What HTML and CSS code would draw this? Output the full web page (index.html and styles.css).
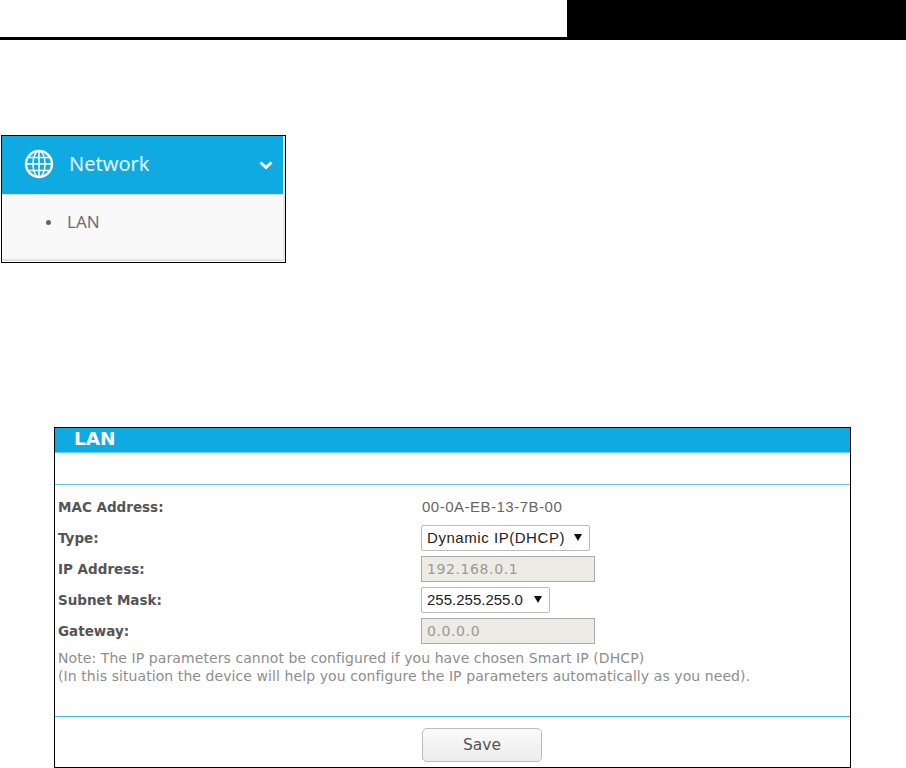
FILE: index.html
```html
<!DOCTYPE html>
<html lang="en">
<head>
<meta charset="utf-8">
<title>LAN</title>
<link rel="stylesheet" href="styles.css">
</head>
<body>
<header class="top"><div class="top-fill"></div><div class="top-block"></div></header>
<section class="menu">
  <div class="menu-head">
    <svg class="globe" width="30" height="30" viewBox="0 0 30 30" fill="none" stroke="#fff">
      <circle cx="15" cy="15" r="13" stroke-width="2.4"/>
      <ellipse cx="15" cy="15" rx="6" ry="13" stroke-width="1.5"/>
      <path d="M15 2v26M2 15h26M4.500 8.500h21M4.500 21.500h21" stroke-width="1.500"/>
    </svg>
    <span class="menu-title">Network</span>
    <svg class="chev" width="14" height="9" viewBox="0 0 14 9" fill="none" stroke="#fff" stroke-width="3"><path d="M1.500 1.500 7 6.500l5.500-5"/></svg>
  </div>
  <div class="menu-item"><span class="dot"></span><span class="menu-link">LAN</span></div>
</section>
<section class="panel">
  <h1 class="panel-title">LAN</h1>
  <div class="form">
    <div class="row row-first"><span class="label">MAC Address:</span><span class="value">00-0A-EB-13-7B-00</span></div>
    <div class="row"><span class="label">Type:</span><span class="select sel-type">Dynamic IP(DHCP)<i class="caret"></i></span></div>
    <div class="row"><span class="label">IP Address:</span><span class="input">192.168.0.1</span></div>
    <div class="row"><span class="label">Subnet Mask:</span><span class="select sel-mask">255.255.255.0<i class="caret"></i></span></div>
    <div class="row"><span class="label">Gateway:</span><span class="input">0.0.0.0</span></div>
    <p class="note">Note: The IP parameters cannot be configured if you have chosen Smart IP (DHCP)<br>(In this situation the device will help you configure the IP parameters automatically as you need).</p>
  </div>
  <div class="actions"><button class="save" type="button">Save</button></div>
</section>
</body>
</html>
```
FILE: styles.css
```css
html, body { margin: 0; padding: 0; background: #fff; }
body { height: 768px; overflow: hidden; font-family: "DejaVu Sans", Verdana, sans-serif; }
.top { display: flex; height: 37px; border-bottom: 3px solid #000; }
.top-fill { flex: 0 0 567px; }
.top-block { flex: 1; background: #000; }
.menu { box-sizing: border-box; width: 285px; height: 128px; margin: 95px 0 0 1px; border: 1px solid #000; background: #f9f9f9; }
.menu-head { box-sizing: border-box; display: flex; align-items: center; height: 59px; padding: 0 10px 3px 22px; background: #10aae2; border-bottom: 1px solid #dcdcdc; border-right: 2px solid #e6e6e6; }
.globe { flex: none; }
.menu-title { margin-left: 15px; font: 20px/24px "Noto Sans", sans-serif; color: #e8f6fc; flex: 1; }
.chev { flex: none; margin-top: 3px; }
.menu-item { box-sizing: border-box; display: flex; align-items: center; height: 66px; padding: 0 0 10px 44px; color: #6f6f6f; border-right: 2px solid #e6e6e6; border-bottom: 2px solid #e2e2e2; }
.dot { width: 5px; height: 5px; border-radius: 50%; background: #666; }
.menu-link { margin-left: 16px; font: 17px/22px "Noto Sans", sans-serif; }
.panel { box-sizing: border-box; width: 797px; height: 341px; margin: 164px 0 0 54px; border: 1px solid #000; }
.panel-title { height: 24px; margin: 0; padding-left: 19px; background: #10aae2; color: #fff; font: bold 18.500px/21px "DejaVu Sans", sans-serif; border-bottom: 1px solid #6fcdf0; }
.form { height: 231px; margin-top: 31px; border-top: 1px solid #5cc6ee; border-bottom: 1px solid #3fb9ea; }
.row { display: flex; align-items: center; height: 31px; padding-left: 3px; }
.row-first { box-sizing: border-box; height: 37px; padding-top: 7px; }
.label { flex: 0 0 363px; font-size: 13.500px; font-weight: bold; color: #555; }
.value { margin-left: 1px; font: 15px/18px "Liberation Sans", sans-serif; color: #666; letter-spacing: .5px; }
.select { box-sizing: border-box; display: flex; align-items: center; justify-content: space-between; height: 26px; padding: 0 7px 0 5px; background: #fff; border: 1px solid #bbb; border-radius: 2px; font: 15px/20px "Liberation Sans", sans-serif; color: #222; }
.sel-type { width: 169px; letter-spacing: .55px; }
.sel-mask { width: 129px; }
.caret { width: 0; height: 0; border-left: 4px solid transparent; border-right: 4px solid transparent; border-top: 7px solid #111; }
.input { box-sizing: border-box; width: 174px; height: 26px; padding-left: 5px; background: #ecebe4; border: 1px solid #aaa; font-size: 14px; line-height: 24px; letter-spacing: .6px; color: #999; }
.note { margin: 3px 0 0 3px; font-size: 14px; line-height: 18px; letter-spacing: .08px; color: #8d8d8d; }
.actions { display: flex; padding: 11px 0 0 367px; }
.save { box-sizing: border-box; width: 120px; height: 34px; border: 1px solid #bbb; border-radius: 5px; background: linear-gradient(#fbfbfb, #ececec); font: 15.500px "DejaVu Sans", sans-serif; color: #555; }
```
